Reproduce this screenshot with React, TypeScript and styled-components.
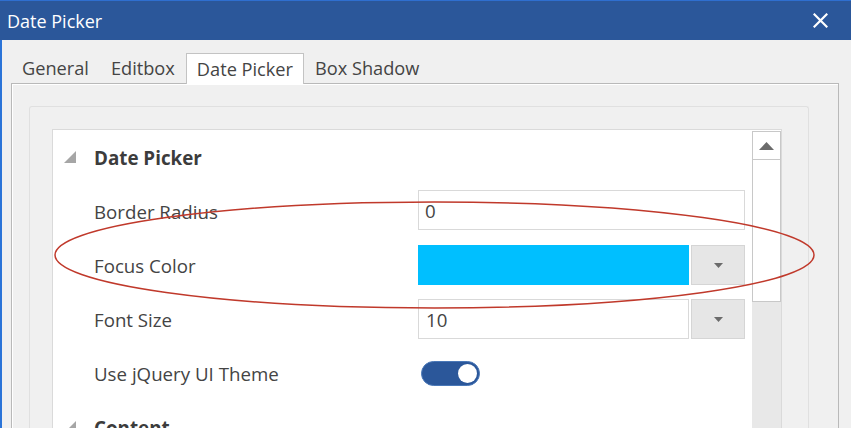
import React from 'react'
import styled, { createGlobalStyle } from 'styled-components'

const GlobalStyle = createGlobalStyle`
  html, body {
    margin: 0;
    padding: 0;
    overflow: hidden;
    background: #f0f0f0;
  }
  body {
    font-family: 'Open Sans', 'Noto Sans', sans-serif;
  }
`

const Window = styled.div`
  position: relative;
  width: 851px;
  height: 428px;
  display: flex;
  flex-direction: column;
  overflow: hidden;
  background: #f0f0f0;
`

const TitleBar = styled.div`
  height: 40px;
  flex: none;
  box-sizing: border-box;
  border-top: 1px solid #2f6fd0;
  background: #2b579a;
  display: flex;
  align-items: center;
  justify-content: space-between;
  padding: 0 23px 0 7px;
  color: #ffffff;
  font-size: 18px;
`

const CloseButton = styled.button`
  border: none;
  background: none;
  padding: 0;
  width: 16px;
  height: 16px;
  display: flex;
  align-items: center;
  justify-content: center;
  cursor: pointer;
`

const Body = styled.div`
  flex: 1;
  display: flex;
  flex-direction: column;
  min-height: 0;
  border-left: 2px solid #2b74d8;
  padding: 13px 12px 0 9px;
`

const TabRow = styled.div`
  display: flex;
  height: 30px;
  flex: none;
`

const Tab = styled.div<{ $active?: boolean }>`
  box-sizing: border-box;
  height: ${({ $active }) => ($active ? '31px' : '30px')};
  padding: 0 ${({ $active }) => ($active ? '10px' : '11px')};
  display: flex;
  align-items: center;
  font-size: 18.2px;
  color: #444444;
  position: relative;
  z-index: 1;
  background: ${({ $active }) => ($active ? '#ffffff' : 'transparent')};
  border: ${({ $active }) => ($active ? '1px solid #c3c3c3' : 'none')};
  border-bottom: none;
`

const TabPanel = styled.div`
  flex: 1;
  min-height: 0;
  display: flex;
  flex-direction: column;
  border: 1px solid #b9b9b9;
  border-bottom: none;
  box-shadow: inset 1px 1px 0 #ffffff;
  padding: 22px 29px 0 17px;
`

const GroupBox = styled.div`
  flex: 1;
  min-height: 0;
  display: flex;
  flex-direction: column;
  border: 1px solid #e0e0e0;
  border-bottom: none;
  border-radius: 3px 3px 0 0;
  padding: 22px 26px 0 22px;
`

const Grid = styled.div`
  flex: 1;
  min-height: 0;
  display: flex;
  background: #ffffff;
  border: 1px solid #dadada;
  border-bottom: none;
`

const GridBody = styled.div`
  flex: 1;
  padding-top: 1px;
  overflow: hidden;
`

const Row = styled.div`
  height: 54px;
  display: grid;
  grid-template-columns: 41px 324px 327px;
  align-items: center;
  font-size: 18.7px;
  color: #444444;
`

const Expander = styled.span`
  display: flex;
  align-items: center;
  justify-content: flex-end;
  padding-right: 17px;
  margin-top: -2px;
`

const SectionTitle = styled.span`
  font-weight: 700;
  font-size: 18.8px;
  color: #3c3c3c;
`

const Label = styled.span`
  white-space: nowrap;
  margin-top: -2px;
`

const TextBox = styled.div`
  box-sizing: border-box;
  height: 40px;
  width: 100%;
  border: 1px solid #d9d9d9;
  background: #ffffff;
  display: flex;
  align-items: center;
  padding-left: 6px;
  margin-top: -4px;
  color: #444444;
`

const Select = styled.div`
  display: flex;
  gap: 2px;
  height: 40px;
  margin-top: -2px;
`

const SelectValue = styled.div<{ $swatch?: string }>`
  box-sizing: border-box;
  flex: 1;
  border: 1px solid ${({ $swatch }) => ($swatch ? $swatch : '#d9d9d9')};
  background: ${({ $swatch }) => $swatch ?? '#ffffff'};
  display: flex;
  align-items: center;
  padding-left: 7px;
`

const SelectButton = styled.div`
  box-sizing: border-box;
  width: 54px;
  background: #e6e6e6;
  border: 1px solid #d5d5d5;
  display: flex;
  align-items: center;
  justify-content: center;
`

const Toggle = styled.div<{ $on?: boolean }>`
  box-sizing: border-box;
  width: 59px;
  height: 25px;
  margin: -2px 0 0 3px;
  border-radius: 13px;
  background: ${({ $on }) => ($on ? '#2b579a' : '#cccccc')};
  border: 1px solid ${({ $on }) => ($on ? '#4a78b8' : '#bbbbbb')};
  display: flex;
  align-items: center;
  justify-content: ${({ $on }) => ($on ? 'flex-end' : 'flex-start')};
  padding: 0 2px;
`

const Knob = styled.span`
  width: 19px;
  height: 19px;
  border-radius: 50%;
  background: #ffffff;
`

const ScrollBar = styled.div`
  width: 29px;
  flex: none;
  margin: 1px 0 0 7px;
  display: flex;
  flex-direction: column;
  background: #e8e8e8;
`

const ScrollArrow = styled.div`
  box-sizing: border-box;
  height: 29px;
  border: 1px solid #c8c8c8;
  background: #ffffff;
  display: flex;
  align-items: center;
  justify-content: center;
`

const ScrollThumb = styled.div`
  box-sizing: border-box;
  height: 142px;
  border: 1px solid #c8c8c8;
  border-top: none;
  background: #ffffff;
`

const Annotation = styled.svg`
  position: absolute;
  inset: 0;
  pointer-events: none;
`

const ExpandIcon = () => (
  <svg width="13" height="13" viewBox="0 0 13 13">
    <polygon points="12,0 12,12 0,12" fill="#a6a6a6" />
  </svg>
)

const CaretDown = () => (
  <svg width="9" height="5" viewBox="0 0 9 5">
    <polygon points="0,0 9,0 4.5,5" fill="#6b6b6b" />
  </svg>
)

const tabs = ['General', 'Editbox', 'Date Picker', 'Box Shadow']

const App = () => {
  return (
    <Window>
      <GlobalStyle />
      <TitleBar>
        <span>Date Picker</span>
        <CloseButton aria-label="close">
          <svg width="15" height="15" viewBox="0 0 15 15">
            <path
              d="M1.5 1.5 L13.5 13.5 M13.5 1.5 L1.5 13.5"
              stroke="#ffffff"
              strokeWidth="2.2"
              strokeLinecap="square"
            />
          </svg>
        </CloseButton>
      </TitleBar>
      <Body>
        <TabRow>
          {tabs.map((t) => (
            <Tab key={t} $active={t === 'Date Picker'}>
              {t}
            </Tab>
          ))}
        </TabRow>
        <TabPanel>
          <GroupBox>
            <Grid>
              <GridBody>
                <Row>
                  <Expander>
                    <ExpandIcon />
                  </Expander>
                  <SectionTitle>Date Picker</SectionTitle>
                </Row>
                <Row>
                  <span />
                  <Label>Border Radius</Label>
                  <TextBox>0</TextBox>
                </Row>
                <Row>
                  <span />
                  <Label>Focus Color</Label>
                  <Select>
                    <SelectValue $swatch="#00bfff" />
                    <SelectButton>
                      <CaretDown />
                    </SelectButton>
                  </Select>
                </Row>
                <Row>
                  <span />
                  <Label>Font Size</Label>
                  <Select>
                    <SelectValue>10</SelectValue>
                    <SelectButton>
                      <CaretDown />
                    </SelectButton>
                  </Select>
                </Row>
                <Row>
                  <span />
                  <Label>Use jQuery UI Theme</Label>
                  <Toggle $on>
                    <Knob />
                  </Toggle>
                </Row>
                <Row>
                  <Expander>
                    <ExpandIcon />
                  </Expander>
                  <SectionTitle>Content</SectionTitle>
                </Row>
              </GridBody>
              <ScrollBar>
                <ScrollArrow>
                  <svg width="15" height="8" viewBox="0 0 15 8">
                    <polygon points="7.5,0 15,8 0,8" fill="#6b6b6b" />
                  </svg>
                </ScrollArrow>
                <ScrollThumb />
              </ScrollBar>
            </Grid>
          </GroupBox>
        </TabPanel>
      </Body>
      <Annotation width="851" height="428" viewBox="0 0 851 428">
        <ellipse
          cx="434.5"
          cy="255"
          rx="379.5"
          ry="53"
          fill="none"
          stroke="#c0392b"
          strokeWidth="1.5"
        />
      </Annotation>
    </Window>
  )
}

export default App
